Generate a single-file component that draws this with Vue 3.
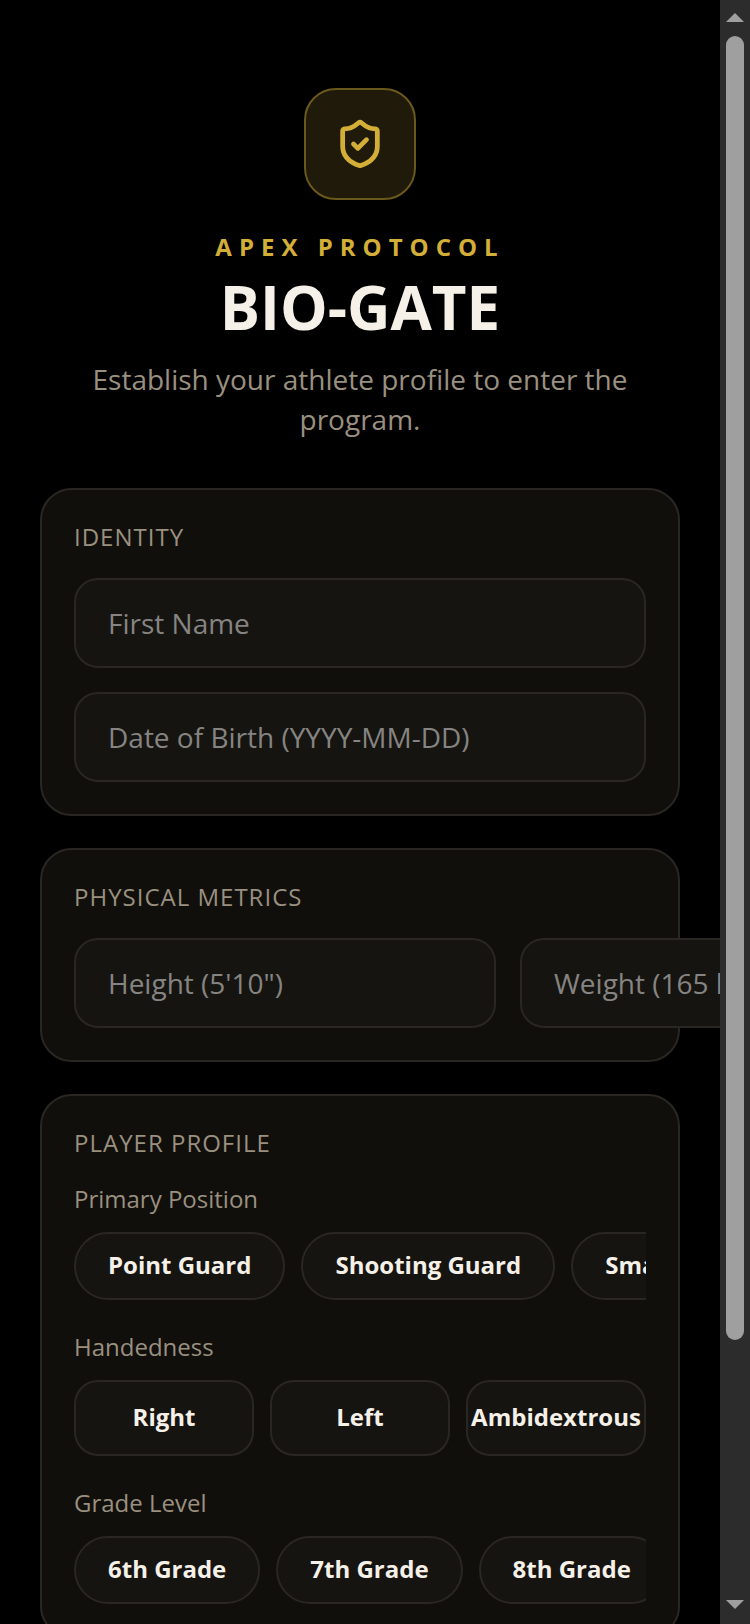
<template>
  <div class="screen">
    <main class="content">
      <header class="hero">
        <div class="hero-icon">
          <svg viewBox="0 0 24 24" aria-hidden="true">
            <path d="M20 13c0 5-3.5 7.5-7.66 8.95a1 1 0 0 1-.67-.01C7.5 20.5 4 18 4 13V6a1 1 0 0 1 1-1c2 0 4.5-1.2 6.24-2.72a1.17 1.17 0 0 1 1.52 0C14.51 3.81 17 5 19 5a1 1 0 0 1 1 1z" />
            <path d="m9 12 2 2 4-4" />
          </svg>
        </div>
        <p class="overline">APEX PROTOCOL</p>
        <h1>BIO-GATE</h1>
        <p class="subtitle">Establish your athlete profile to enter the program.</p>
      </header>

      <form class="form" @submit.prevent>
        <!-- Identity -->
        <section class="card">
          <h2>IDENTITY</h2>
          <div class="fields">
            <input v-model="firstName" type="text" placeholder="First Name" aria-label="First Name" />
            <input v-model="birthDate" type="text" placeholder="Date of Birth (YYYY-MM-DD)" aria-label="Date of Birth" />
          </div>
        </section>

        <!-- Physical metrics -->
        <section class="card">
          <h2>PHYSICAL METRICS</h2>
          <div class="fields fields-row">
            <input v-model="height" type="text" placeholder="Height (5'10&quot;)" aria-label="Height" />
            <input v-model="weight" type="text" placeholder="Weight (165 lbs)" aria-label="Weight" />
          </div>
        </section>

        <!-- Player profile -->
        <section class="card">
          <h2>PLAYER PROFILE</h2>
          <div class="groups">
            <div>
              <h3>Primary Position</h3>
              <div class="chips">
                <button
                    v-for="item in positions"
                    :key="item"
                    type="button"
                    class="chip"
                    :class="{ active: position === item }"
                    @click="position = item"
                >{{ item }}</button>
              </div>
            </div>

            <div>
              <h3>Handedness</h3>
              <div class="segments">
                <button
                    v-for="item in hands"
                    :key="item"
                    type="button"
                    class="segment"
                    :class="{ active: hand === item }"
                    @click="hand = item"
                >{{ item }}</button>
              </div>
            </div>

            <div>
              <h3>Grade Level</h3>
              <div class="chips">
                <button
                    v-for="item in grades"
                    :key="item"
                    type="button"
                    class="chip"
                    :class="{ active: grade === item }"
                    @click="grade = item"
                >{{ item }}</button>
              </div>
            </div>
          </div>
        </section>
      </form>
    </main>

    <div class="scrollbar" aria-hidden="true">
      <svg class="arrow" viewBox="0 0 18 9"><path d="M0 9 9 0l9 9z" /></svg>
      <div class="track">
        <div class="thumb"></div>
      </div>
      <svg class="arrow" viewBox="0 0 18 9"><path d="M0 0h18L9 9z" /></svg>
    </div>
  </div>
</template>

<script setup>
import { ref } from 'vue';

const firstName = ref('');
const birthDate = ref('');
const height = ref('');
const weight = ref('');

const position = ref('');
const hand = ref('');
const grade = ref('');

const positions = ['Point Guard', 'Shooting Guard', 'Small Forward'];
const hands = ['Right', 'Left', 'Ambidextrous'];
const grades = ['6th Grade', '7th Grade', '8th Grade'];
</script>

<style>
body {
  background: #000;
}
</style>

<style scoped>
.screen {
  display: flex;
  height: 100vh;
  background: #000;
  color: #f5f0e8;
  font-family: "Open Sans", sans-serif;
}

.content {
  flex: 1;
  min-width: 0;
  box-sizing: border-box;
  padding: 88px 40px 80px;
  overflow-x: hidden;
  overflow-y: auto;
  scrollbar-width: none;
}

h1,
h2,
h3,
p {
  margin: 0;
}

.hero {
  display: flex;
  flex-direction: column;
  align-items: center;
  margin-bottom: 49px;
  text-align: center;
}

.hero-icon {
  display: flex;
  align-items: center;
  justify-content: center;
  box-sizing: border-box;
  width: 112px;
  height: 112px;
  margin-bottom: 31px;
  border: 2px solid #6a581c;
  border-radius: 32px;
  background: #201a0a;
}

.hero-icon svg {
  width: 52px;
  height: 52px;
  fill: none;
  stroke: #d4af37;
  stroke-width: 2.2;
  stroke-linecap: round;
  stroke-linejoin: round;
}

.overline {
  margin-bottom: 8px;
  color: #d4af37;
  font-size: 24px;
  font-weight: 700;
  line-height: 32px;
  letter-spacing: 7px;
}

h1 {
  margin-bottom: 16px;
  font-size: 60px;
  font-weight: 700;
  line-height: 72px;
}

.subtitle {
  color: #9a9080;
  font-size: 28px;
  line-height: 40px;
}

.form {
  display: flex;
  flex-direction: column;
  gap: 32px;
}

.card {
  padding: 32px;
  border: 2px solid #2a2722;
  border-radius: 32px;
  background: #110f0b;
}

h2 {
  margin-bottom: 26px;
  color: #9a9080;
  font-size: 24px;
  font-weight: 400;
  line-height: 30px;
  letter-spacing: 1px;
}

h3 {
  margin-bottom: 18px;
  color: #9a9080;
  font-size: 24px;
  font-weight: 400;
  line-height: 30px;
}

.fields {
  display: flex;
  flex-direction: column;
  gap: 24px;
}

.fields-row {
  flex-direction: row;
}

input {
  box-sizing: border-box;
  height: 90px;
  padding: 0 32px;
  border: 2px solid #2a2722;
  border-radius: 24px;
  outline: none;
  background: #161410;
  color: #f5f0e8;
  font-family: inherit;
  font-size: 28px;
}

input::placeholder {
  color: #858482;
  opacity: 1;
}

.fields-row input {
  flex: 1 0 auto;
  min-width: 422px;
}

.groups {
  display: flex;
  flex-direction: column;
  gap: 32px;
}

.chips {
  display: flex;
  gap: 16px;
  overflow-x: auto;
  scrollbar-width: none;
}

.segments {
  display: grid;
  grid-template-columns: repeat(3, minmax(0, 1fr));
  gap: 16px;
}

.chip,
.segment {
  box-sizing: border-box;
  border: 2px solid #2a2722;
  background: #161410;
  color: #f5f0e8;
  font-family: inherit;
  font-size: 24px;
  font-weight: 700;
  white-space: nowrap;
  cursor: pointer;
}

.chip {
  flex-shrink: 0;
  height: 68px;
  padding: 0 32px 4px;
  border-radius: 34px;
}

.segment {
  height: 76px;
  padding: 0 0 4px;
  border-radius: 24px;
}

input:focus,
.active {
  border-color: #d4af37;
}

.scrollbar {
  display: flex;
  flex-direction: column;
  align-items: center;
  gap: 14px;
  box-sizing: border-box;
  width: 30px;
  padding: 13px 0 15px;
  background: #2c2c2c;
}

.arrow {
  width: 18px;
  height: 9px;
  fill: #9f9f9f;
}

.track {
  flex: 1;
  width: 18px;
}

.thumb {
  height: 84.1%;
  border-radius: 9px;
  background: #9f9f9f;
}
</style>
